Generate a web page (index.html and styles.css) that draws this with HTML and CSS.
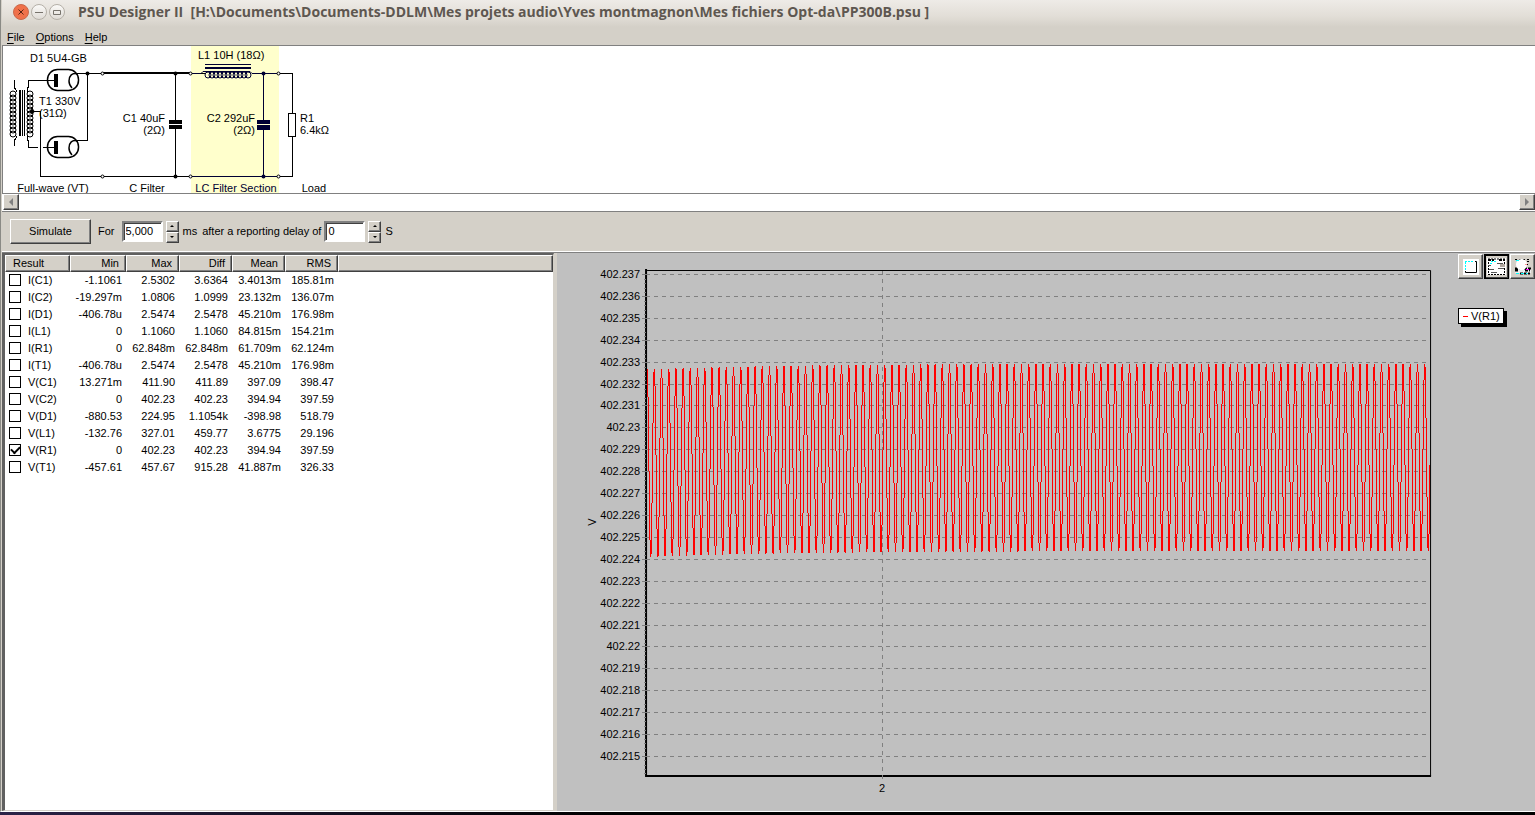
FILE: index.html
```html
<!DOCTYPE html>
<html lang="en">
<head>
<meta charset="utf-8">
<title>PSU Designer II</title>
<link rel="stylesheet" href="styles.css">
</head>
<body>
<div class="window">
  <header class="titlebar">
    <button class="wbtn close" aria-label="Close"><svg viewBox="0 0 14 14"><path d="M4.500 4.500l5 5M9.500 4.500l-5 5"/></svg></button>
    <button class="wbtn" aria-label="Minimize"><svg viewBox="0 0 14 14"><path d="M3 7.500h8"/></svg></button>
    <button class="wbtn" aria-label="Maximize"><svg viewBox="0 0 14 14"><path d="M3.500 5.500h7v4h-7z"/></svg></button>
    <h1 class="title">PSU Designer II&nbsp; [H:\Documents\Documents-DDLM\Mes projets audio\Yves montmagnon\Mes fichiers Opt-da\PP300B.psu ]</h1>
  </header>
  <nav class="menubar">
    <button><u>F</u>ile</button><button><u>O</u>ptions</button><button><u>H</u>elp</button>
  </nav>
  <section class="schematic">
    <svg class="circuit" viewBox="3 46 340 147" width="340" height="147">
      <defs>
        <ellipse id="turn" rx="3" ry="3"/>
        <g id="turns">
          <use href="#turn" y="2"/><use href="#turn" y="6"/><use href="#turn" y="10"/><use href="#turn" y="14"/><use href="#turn" y="18"/><use href="#turn" y="22"/><use href="#turn" y="26"/><use href="#turn" y="30"/><use href="#turn" y="34"/><use href="#turn" y="38"/><use href="#turn" y="42"/>
        </g>
      </defs>
      <rect x="191" y="46" width="88" height="147" fill="#ffffcc"/>
      <g class="wire">
        <path d="M14.500 80v8q3 2 1 5M14.500 146v-6q3-2 1-5M28.500 92q-3-3 0-5v-6.500H54M28.500 136q-3 3 0 5v6.500H38M43 147.500H54M30 111.500h10.500v65H292.500V136M73 73.500H206M252 73.500H292.500V113M87.500 73v67.500H73M175.500 73v47M175.500 129v48"/>
        <rect x="288.500" y="113.500" width="7" height="23" fill="#fff"/>
      </g>
      <use href="#turns" class="coil" transform="translate(13 92)"/>
      <use href="#turns" class="coil" transform="translate(30 92)"/>
      <path d="M19 90h2v46h-2zM22 90h1v46h-1zM24 90h1v46h-1zM54 74h4v13h-4zM54 141h4v13h-4zM102 72h89v2h-89zM169 120h13v4h-13zM169 125h13v4h-13z"/>
      <g fill="none" stroke="#000" stroke-width="1.500">
        <rect x="47.500" y="69.500" width="31" height="21" rx="10"/>
        <rect x="47.500" y="136.500" width="31" height="21" rx="10"/>
        <path d="M78 74c-6-2-9 2-9 7q0 4 3 7M78 141c-6-2-9 2-9 7q0 4 3 7"/>
      </g>
      <path d="M29 111.500l3-3 3 3-3 3z"/>
      <g class="navy">
        <path d="M205 64h46v1h-46zM205 67h46v2h-46zM257 120h13v4h-13zM257 125h13v5h-13z" fill="#000033"/>
        <path d="M191 73.500h10l2-2h47l2 2h27M263.500 73v47M263.500 130v47M191 176.500h88"/>
      </g>
      <use href="#turns" class="coil choke" transform="translate(206 75) rotate(-90)"/>
      <g><circle cx="87.500" cy="73.500" r="2"/><circle cx="175.500" cy="73.500" r="2"/><circle cx="175.500" cy="176.500" r="2"/></g>
      <g fill="#000033"><circle cx="263.500" cy="73.500" r="2"/><circle cx="263.500" cy="176.500" r="2"/></g>
      <g fill="#fff" stroke="#000"><circle cx="102.500" cy="73.500" r="1.500"/><circle cx="102.500" cy="176.500" r="1.500"/><circle cx="190.500" cy="73.500" r="1.500"/><circle cx="190.500" cy="176.500" r="1.500"/><circle cx="278.500" cy="73.500" r="1.500"/><circle cx="278.500" cy="176.500" r="1.500"/></g>
      <g class="label">
        <text x="30" y="62">D1 5U4-GB</text>
        <text x="39" y="105">T1 330V</text>
        <text x="39" y="117">(31Ω)</text>
        <text x="165" y="122" text-anchor="end">C1 40uF</text>
        <text x="165" y="134" text-anchor="end">(2Ω)</text>
        <text x="198" y="59">L1 10H (18Ω)</text>
        <text x="255" y="122" text-anchor="end">C2 292uF</text>
        <text x="255" y="134" text-anchor="end">(2Ω)</text>
        <text x="300" y="122">R1</text>
        <text x="300" y="134">6.4kΩ</text>
        <text x="53" y="192" text-anchor="middle">Full-wave (VT)</text>
        <text x="147" y="192" text-anchor="middle">C Filter</text>
        <text x="236" y="192" text-anchor="middle" fill="#000033">LC Filter Section</text>
        <text x="314" y="192" text-anchor="middle">Load</text>
      </g>
    </svg>
  </section>
  <div class="scrollbar">
    <button aria-label="Scroll left"><svg viewBox="0 0 14 14"><path d="M9 3v8L5 7z"/></svg></button>
    <button aria-label="Scroll right"><svg viewBox="0 0 14 14"><path d="M5 3v8l4-4z"/></svg></button>
  </div>
  <form class="controls">
    <button type="button" class="simulate">Simulate</button>
    <label for="duration">For</label>
    <span class="spin"><input id="duration" value="5,000"><span class="arrows"><button type="button" aria-label="Increase duration"><i class="up"></i></button><button type="button" aria-label="Decrease duration"><i class="down"></i></button></span></span>
    <span class="unit">ms</span>
    <label for="delay" class="delay">after a reporting delay of</label>
    <span class="spin tight"><input id="delay" value="0"><span class="arrows"><button type="button" aria-label="Increase delay"><i class="up"></i></button><button type="button" aria-label="Decrease delay"><i class="down"></i></button></span></span>
    <span class="unit">S</span>
  </form>
  <main class="main">
    <section class="results">
      <table>
        <colgroup><col class="c-name"><col class="c-min"><col class="c-num"><col class="c-num"><col class="c-num"><col class="c-num"><col></colgroup>
        <thead><tr><th>Result</th><th>Min</th><th>Max</th><th>Diff</th><th>Mean</th><th>RMS</th><th></th></tr></thead>
        <tbody>
          <tr><td><label><input type="checkbox">I(C1)</label></td><td>-1.1061</td><td>2.5302</td><td>3.6364</td><td>3.4013m</td><td>185.81m</td><td></td></tr>
          <tr><td><label><input type="checkbox">I(C2)</label></td><td>-19.297m</td><td>1.0806</td><td>1.0999</td><td>23.132m</td><td>136.07m</td><td></td></tr>
          <tr><td><label><input type="checkbox">I(D1)</label></td><td>-406.78u</td><td>2.5474</td><td>2.5478</td><td>45.210m</td><td>176.98m</td><td></td></tr>
          <tr><td><label><input type="checkbox">I(L1)</label></td><td>0</td><td>1.1060</td><td>1.1060</td><td>84.815m</td><td>154.21m</td><td></td></tr>
          <tr><td><label><input type="checkbox">I(R1)</label></td><td>0</td><td>62.848m</td><td>62.848m</td><td>61.709m</td><td>62.124m</td><td></td></tr>
          <tr><td><label><input type="checkbox">I(T1)</label></td><td>-406.78u</td><td>2.5474</td><td>2.5478</td><td>45.210m</td><td>176.98m</td><td></td></tr>
          <tr><td><label><input type="checkbox">V(C1)</label></td><td>13.271m</td><td>411.90</td><td>411.89</td><td>397.09</td><td>398.47</td><td></td></tr>
          <tr><td><label><input type="checkbox">V(C2)</label></td><td>0</td><td>402.23</td><td>402.23</td><td>394.94</td><td>397.59</td><td></td></tr>
          <tr><td><label><input type="checkbox">V(D1)</label></td><td>-880.53</td><td>224.95</td><td>1.1054k</td><td>-398.98</td><td>518.79</td><td></td></tr>
          <tr><td><label><input type="checkbox">V(L1)</label></td><td>-132.76</td><td>327.01</td><td>459.77</td><td>3.6775</td><td>29.196</td><td></td></tr>
          <tr><td><label><input type="checkbox" checked>V(R1)</label></td><td>0</td><td>402.23</td><td>402.23</td><td>394.94</td><td>397.59</td><td></td></tr>
          <tr><td><label><input type="checkbox">V(T1)</label></td><td>-457.61</td><td>457.67</td><td>915.28</td><td>41.887m</td><td>326.33</td><td></td></tr>
        </tbody>
      </table>
    </section>
    <section class="graph">
      <svg class="plot" id="plot" viewBox="557 253 893 558" role="img" aria-label="V(R1) over time">
        <path d="M647 270.500H1430.500V776" fill="none" stroke="#000"/>
        <path d="M646 269V776H1431" fill="none" stroke="#000" stroke-width="2"/>
        <g id="grid"></g>
        <path class="grid-line" d="M882.500 271V780"/>
        <path id="wave" class="wave"/>
        <text class="axis" x="882" y="792" text-anchor="middle">2</text>
        <text class="axis" x="596" y="522" text-anchor="middle" transform="rotate(-90 596 522)">V</text>
      </svg>
      <aside class="side">
        <div class="tools">
          <button aria-label="Zoom window"><svg viewBox="0 0 21 21"><path fill="#fff" d="M3 3h16v16H3z"/><path d="M15 5.500h1.500v11h-11V15" fill="none" stroke="#000"/><path d="M5 5.500h9M5.500 6v8" fill="none" stroke="#0ff" stroke-dasharray="2 1"/></svg></button>
          <button class="active" aria-label="Toggle grid"><svg viewBox="0 0 21 21"><path fill="#fff" d="M1 2h19v17H1z"/><path d="M2 3h17M2 18.500h17M2.500 3v16M18.500 3v16" fill="none" stroke="#000" stroke-dasharray="2 1"/><path d="M2 4h6M13 4h6" stroke="#000" stroke-width="2" stroke-dasharray="3 1"/><path d="M14 8h5v3h-5z" fill="#b0a8a0"/><path d="M11 7.500h6M2 9.500h3M12 12.500h6M3 13.500h5M5 16.500h6" stroke="#555"/><path d="M5 5.500h6M4 7.500h3" stroke="#0ff" stroke-dasharray="2 1"/></svg></button>
          <button aria-label="Copy image"><svg viewBox="0 0 21 21"><path d="M3 3.500h16M15 5.500h4M14 8.500h4" fill="none" stroke="#000" stroke-dasharray="2 2"/><path d="M3 12h16v5H3z" fill="#eee"/><path d="M3 12.500h5M12 12.500h7M3 14.500h4M13 14.500h5M8 17.500h10" stroke="#000" stroke-width="2" stroke-dasharray="3 1"/><circle cx="9.500" cy="8.500" r="5.500" fill="#fff"/><path d="M4 17.500h12M4 4.500h4" stroke="#0ff" stroke-dasharray="3 2"/><path d="M14 13.500h3" stroke="#f0f"/><path d="M13 8.500h2" stroke="#f99"/></svg></button>
        </div>
        <div class="legend"><i></i>V(R1)</div>
      </aside>
    </section>
  </main>
</div>
<script src="plot.js"></script>
</body>
</html>
```
FILE: styles.css
```css
* { box-sizing: border-box; }
body {
  margin: 0;
  height: 100vh;
  overflow: hidden;
  background: linear-gradient(90deg, #2c2348, #000 40%);
  font: 11px/13px "Liberation Sans", Arial, sans-serif;
  color: #000;
  padding-bottom: 3px;
}
button, input { font: inherit; color: inherit; margin: 0; padding: 0; }
.window {
  height: 100%;
  display: flex;
  flex-direction: column;
  background: #d4d0c8;
  border-left: 1px solid #8a8a85;
  padding-left: 1px;
  border-bottom: 1px solid #fff;
}
.titlebar {
  flex: none;
  height: 27px;
  display: flex;
  align-items: center;
  gap: 2px;
  padding: 0 11px 3px;
  background: linear-gradient(#eeebe7, #e2ded7 60%, #d4d0c8);
}
.wbtn {
  flex: none;
  width: 16px;
  height: 16px;
  border: 1px solid #b5b0a8;
  border-radius: 50%;
  background: linear-gradient(#fbfaf8, #dfdbd5);
}
.wbtn svg { display: block; width: 14px; height: 14px; fill: none; stroke: #77736c; stroke-width: 1; }
.close { background: #f0714a; border-color: #c9694c; }
.close svg { stroke: #5a2413; }
.title { margin: 0 0 0 11px; font: bold 14px/20px "Open Sans", "Noto Sans", sans-serif; color: #5e5750; white-space: nowrap; }
.menubar { flex: none; height: 18px; display: flex; gap: 11px; padding: 0 5px; }
.menubar button { border: 0; background: none; height: 20px; }
.menubar u { text-underline-offset: 2px; }
.schematic { flex: none; border: solid #808080; border-width: 1px 0 1px 1px; background: #fff; }
.circuit { display: block; }
.wire, .wire path { fill: none; stroke: #000; shape-rendering: crispEdges; }
.wire rect { stroke: #000; }
.coil { fill: none; stroke: #000; }
.choke { stroke: #000033; }
.navy path { stroke: #000033; fill: none; }
.navy path[fill] { fill: #000033; stroke: none; }
.label { font-size: 11px; }
.scrollbar { flex: none; height: 18px; display: flex; justify-content: space-between; padding-left: 1px; background: #fff; border-bottom: 1px solid #808080; }
.scrollbar button, .controls button, .tools button {
  background: #d4d0c8;
  border: 1px solid;
  border-color: #fff #404040 #404040 #fff;
  box-shadow: inset -1px -1px #808080;
}
.scrollbar button { width: 16px; height: 16px; }
.scrollbar svg { display: block; width: 14px; height: 14px; fill: #808080; }
.controls { flex: none; height: 40px; display: flex; align-items: center; padding-left: 8px; border-bottom: 1px solid #fff; }
.controls .simulate { width: 81px; height: 25px; margin-right: 7px; }
.spin { display: flex; gap: 3px; margin: 0 4px 0 7px; }
.spin input { width: 41px; height: 21px; padding: 0 2px 1px; background: #fff; border: 2px solid; border-color: #808080 #fff #fff #808080; box-shadow: inset 1px 1px #404040; outline: 0; }
.tight { margin-left: 3px; }
.arrows { display: flex; flex-direction: column; }
.controls .arrows button { width: 13px; height: 11px; display: flex; align-items: center; justify-content: center; }
.up, .down { border: solid transparent; border-width: 0 2px; }
.up { border-bottom: 2px solid #000; }
.down { border-top: 2px solid #000; }
.delay { margin-left: 5px; }
.main { flex: 1; min-height: 0; display: flex; border-top: 1px solid #808080; }
.results { flex: none; width: 36%; border: solid; border-width: 2px 1px 1px 3px; border-color: #606060 #d4d0c8 #d4d0c8 #606060; background: #fff; overflow: hidden; }
.results table { width: 100%; border-collapse: separate; border-spacing: 0; table-layout: fixed; }
.c-name { width: 65px; }
.c-min { width: 56px; }
.c-num { width: 53px; }
.results th { height: 17px; padding: 0 6px 0 0; background: #d4d0c8; font-weight: normal; text-align: right; border: 1px solid; border-color: #fff #404040 #404040 #fff; box-shadow: inset -1px -1px #808080; }
.results th:first-child { text-align: left; padding-left: 7px; }
.results td { height: 17px; padding: 0 4px 0 0; text-align: right; }
.results td:first-child { text-align: left; padding-left: 4px; }
.results label { display: flex; align-items: flex-start; gap: 7px; }
.results input { appearance: none; width: 12px; height: 12px; border: 1px solid #000; background: #fff; }
.results input:checked::after { content: ""; display: block; width: 7px; height: 4px; margin: 1px; border: solid #000; border-width: 0 0 2px 2px; transform: rotate(-45deg); }
.graph { flex: 1; min-width: 0; display: flex; margin-left: 3px; background: #c0c0c0; }
.plot { flex: 1; min-width: 0; height: 100%; }
.axis { font-size: 11px; }
.grid-line { stroke: #808080; stroke-dasharray: 4 4; fill: none; shape-rendering: crispEdges; }
.tick { stroke: #808080; shape-rendering: crispEdges; }
.wave { fill: none; stroke: #f00; shape-rendering: crispEdges; }
.side { flex: none; width: 85px; padding: 1px 0 0 8px; overflow: hidden; }
.tools { display: flex; gap: 1px; }
.tools button { flex: none; width: 25px; height: 25px; padding: 1px; }
.tools .active { border: 1px solid #000; box-shadow: inset 1px 1px #000, inset -1px -1px #404040; }
.tools svg { display: block; width: 21px; height: 21px; }
.legend { display: inline-flex; align-items: center; gap: 3px; height: 16px; margin-top: 29px; padding: 0 3px 0 4px; background: #fff; border: 1px solid #000; box-shadow: 3px 3px #000; }
.legend i { width: 5px; height: 1px; background: #f00; }
```
FILE: plot.js
```js
// Draws the value scale, its grid lines and the ripple waveform.
const grid = document.getElementById("grid");
let markup = "";
for (let i = 0; i <= 22; i++) {
  const y = Math.round(274 + i * 21.91) + 0.5;
  const value = String(Number((402.237 - i / 1000).toFixed(3)));
  markup += `<path class="grid-line" d="M646 ${y}H1428"/><path class="tick" d="M642 ${y}h4"/>`;
  markup += `<text class="axis" x="640" y="${y + 3.5}" text-anchor="end">${value}</text>`;
  for (let k = 1; k < 5 && i < 22; k++) {
    markup += `<path class="tick" d="M644 ${Math.round(y + k * 4.38) + 0.5}h2"/>`;
  }
}
for (const y of [760, 765, 769, 773]) markup += `<path class="tick" d="M644 ${y}.5h2"/>`;
grid.innerHTML = markup;

// One vertical bar per pixel column, spanning the curve's range inside it.
const period = 7.2;
const level = (x) => {
  const settle = Math.exp(-(x - 647) / 150);
  const top = 363.5 + 6 * settle;
  const bottom = 551 + 6 * settle;
  return (top + bottom) / 2 - ((bottom - top) / 2) * Math.cos((2 * Math.PI * (x - 654.3)) / period);
};
let bars = "";
for (let x = 647; x < 1430; x++) {
  const span = [];
  for (let k = 0; k <= 10; k++) span.push(level(x + k / 10));
  bars += `M${x + 0.5} ${Math.round(Math.min(...span))}V${Math.round(Math.max(...span))}`;
}
document.getElementById("wave").setAttribute("d", bars);
```
